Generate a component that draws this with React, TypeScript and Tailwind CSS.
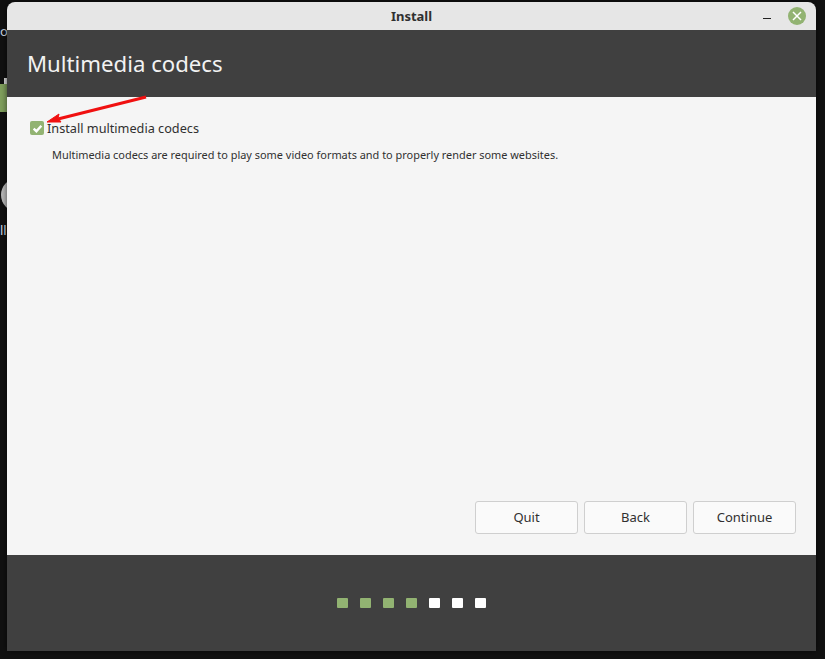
export default function App() {
  const dots = ["#92b372", "#92b372", "#92b372", "#92b372", "#ffffff", "#ffffff", "#ffffff"];
  return (
    <div className="relative w-[825px] h-[659px] overflow-hidden bg-[#111111] pt-[2px] pl-[7px] font-['Noto_Sans',sans-serif]">
      {/* desktop behind the window */}
      <span className="absolute left-0 top-[23px] text-[13px] leading-4 text-[#c9d4e0]">o</span>
      <div className="absolute left-[4px] top-[78px] w-[3px] h-[6px] bg-[#d8d8d8]" />
      <div className="absolute left-0 top-[84px] w-[7px] h-[28px] bg-[#7f9f5c]" />
      <div className="absolute left-[1px] top-[178px] w-[34px] h-[34px] rounded-full bg-[#b9b9b9]" />
      <span className="absolute left-0 top-[222px] text-[13px] leading-4 text-[#cfd8e6]">ll</span>

      <div className="relative flex flex-col w-[809px] h-[649px] rounded-tl-[8px] rounded-tr-[8px] overflow-hidden shadow-[0_0_6px_rgba(0,0,0,0.6)]">
        <div className="relative flex items-center justify-center h-[28px] pt-[2px] bg-[#e6e6e6]">
          <span className="text-[13px] font-bold text-[#303030]">Install</span>
          <div className="absolute right-[10px] top-[5px] flex items-center gap-[17px]">
            <div className="w-[8px] h-[1px] mt-[5px] bg-[#222222]" />
            <div className="flex items-center justify-center w-[18px] h-[18px] rounded-full bg-[#92b372]">
              <svg width="10" height="10" viewBox="0 0 10 10">
                <path d="M1 1L9 9M9 1L1 9" stroke="#ffffff" strokeWidth="1.5" fill="none" />
              </svg>
            </div>
          </div>
        </div>
        <div className="flex items-center h-[67px] pl-[20px] pt-[2px] bg-[#404040]">
          <h1 className="text-[22.2px] leading-none text-[#f2f2f2]">Multimedia codecs</h1>
        </div>
        <div className="flex flex-col flex-1 bg-[#f5f5f5] pt-[24px] pl-[23px] pr-[20px] pb-[21px]">
          <div className="flex items-center h-[14px]">
            <div className="flex items-center justify-center w-[14px] h-[14px] rounded-[2px] bg-[#92b372]">
              <svg width="11" height="11" viewBox="0 0 10 10">
                <path d="M1.5 5.2L4 7.5L8.5 2.5" stroke="#ffffff" strokeWidth="2.2" fill="none" />
              </svg>
            </div>
            <span className="ml-[3px] pt-[1px] text-[12.7px] text-[#303030] whitespace-nowrap">Install multimedia codecs</span>
          </div>
          <p className="mt-[13px] ml-[22px] text-[10.93px] leading-[14px] text-[#303030] whitespace-nowrap">
            Multimedia codecs are required to play some video formats and to properly render some websites.
          </p>
          <div className="flex justify-end gap-[6px] mt-auto">
            {["Quit", "Back", "Continue"].map((label) => (
              <button
                key={label}
                className="w-[103px] h-[33px] rounded-[3px] border border-[#cfcfcf] bg-[#fafafa] text-[13px] text-[#303030]"
              >
                {label}
              </button>
            ))}
          </div>
        </div>
        <div className="flex items-center justify-center gap-[12px] h-[96px] bg-[#404040]">
          {dots.map((color, i) => (
            <div key={i} className="w-[11px] h-[10px] rounded-[1px]" style={{ backgroundColor: color }} />
          ))}
        </div>
      </div>

      {/* annotation arrow */}
      <svg className="absolute left-0 top-0 pointer-events-none" width="825" height="659">
        <path d="M146 97L58 119" stroke="#f01010" strokeWidth="3" fill="none" />
        <path d="M47 122L59 114L58 118L61 122Z" fill="#f01010" stroke="#f01010" strokeWidth="1" />
      </svg>
    </div>
  );
}
